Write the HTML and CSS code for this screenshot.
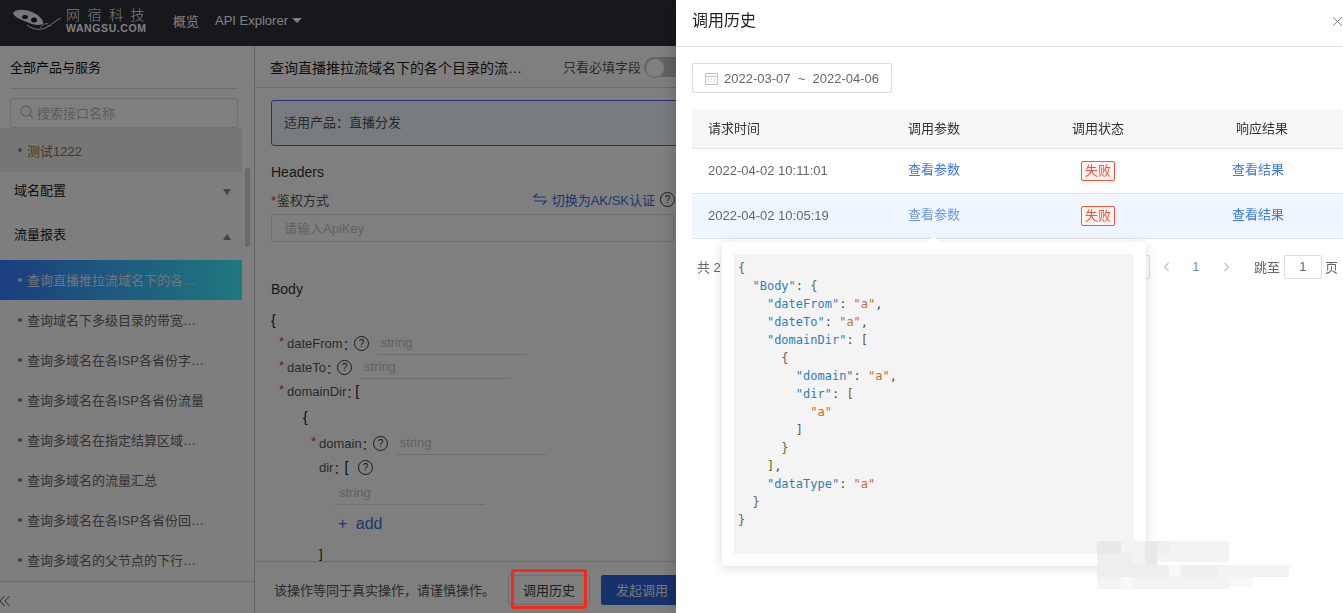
FILE: index.html
```html
<!DOCTYPE html>
<html lang="zh-CN">
<head>
<meta charset="utf-8">
<title>API Explorer</title>
<link rel="stylesheet" href="styles.css">
</head>
<body>
<div class="app">
  <header class="topbar">
    <div class="logo">
      <svg class="logo-mark" width="52" height="24" viewBox="0 0 52 24">
        <path d="M0 4C3 0 11 0 19 3c7 3 12 8 11 12-4 2-10 1-16-2C7 10 1 8 0 4z" fill="#f0f0f0"/>
        <ellipse cx="12" cy="8" rx="3" ry="2" fill="#1a1c20"/>
        <ellipse cx="21" cy="11" rx="3" ry="2.5" fill="#1a1c20"/>
        <path d="M14 16c6 5 15 6 22 1 4-3 8-6 12-8" fill="none" stroke="#e8e8e8" stroke-width="1"/>
        <path d="M27 19c3-4 6-5 8-4M32 20c2-3 4-4 6-3" fill="none" stroke="#e8e8e8" stroke-width="1"/>
      </svg>
      <div class="logo-text">
        <span class="logo-cn">网宿科技</span>
        <span class="logo-en">WANGSU.COM</span>
      </div>
    </div>
    <nav class="nav">
      <span>概览</span>
      <span class="nav-api">API Explorer<i class="nav-caret"></i></span>
    </nav>
  </header>
  <div class="main">
    <aside class="sidebar">
      <div class="side-title">全部产品与服务</div>
      <div class="side-search">
        <svg width="14" height="14" viewBox="0 0 14 14" fill="none" stroke="#b5b5b5" stroke-width="1.1"><circle cx="6" cy="6" r="5"/><path d="M9.7 9.7L13 13"/></svg>
        <span>搜索接口名称</span>
      </div>
      <ul class="side-list">
        <li class="api-item api-item-test"><span>测试1222</span></li>
        <li class="side-group">域名配置<i class="caret-down"></i></li>
        <li class="side-group">流量报表<i class="caret-up"></i></li>
        <li class="api-item api-item-active"><span>查询直播推拉流域名下的各个目录的流量</span></li>
        <li class="api-item"><span>查询域名下多级目录的带宽数据汇总</span></li>
        <li class="api-item"><span>查询多域名在各ISP各省份字节数据</span></li>
        <li class="api-item"><span>查询多域名在各ISP各省份流量</span></li>
        <li class="api-item"><span>查询多域名在指定结算区域的流量</span></li>
        <li class="api-item"><span>查询多域名的流量汇总</span></li>
        <li class="api-item"><span>查询多域名在各ISP各省份回源流量</span></li>
        <li class="api-item"><span>查询多域名的父节点的下行流量</span></li>
      </ul>
      <div class="side-foot">
        <svg width="10" height="12" viewBox="0 0 10 12" fill="none" stroke="#5a5a5a" stroke-width="1"><path d="M4.5 1L0 6l4.5 5M9.5 1L5 6l4.5 5"/></svg>
      </div>
      <div class="side-scroll"></div>
    </aside>
    <section class="content">
      <div class="content-head">
        <div class="content-title">查询直播推拉流域名下的各个目录的流量数据</div>
        <div class="only-required">只看必填字段<i class="switch"></i></div>
      </div>
      <div class="content-body">
        <div class="alert">适用产品：直播分发</div>
        <div class="heading heading-headers">Headers</div>
        <div class="auth-row">
          <span><em class="star">*</em>鉴权方式</span>
          <span class="auth-link">
            <svg width="14" height="12" viewBox="0 0 14 12" fill="none" stroke="currentColor" stroke-width="1.1"><path d="M0 4h13M4.5 0.5L1 4M14 8H1M9.5 11.5L13 8"/></svg>
            切换为AK/SK认证
            <svg class="help" width="15" height="15" viewBox="0 0 15 15"><circle cx="7.5" cy="7.5" r="7" fill="none" stroke="#333" stroke-width="1"/><text x="7.5" y="11" text-anchor="middle" font-size="10" fill="#333">?</text></svg>
          </span>
        </div>
        <input class="text-input" placeholder="请输入ApiKey">
        <div class="heading heading-body">Body</div>
        <div class="brace">{</div>
        <div class="field ind1"><em class="star">*</em>dateFrom<b>：</b>
          <svg class="help" width="15" height="15" viewBox="0 0 15 15"><circle cx="7.5" cy="7.5" r="7" fill="none" stroke="#333" stroke-width="1"/><text x="7.5" y="11" text-anchor="middle" font-size="10" fill="#333">?</text></svg>
          <input class="line-input" placeholder="string"></div>
        <div class="field ind1"><em class="star">*</em>dateTo<b>：</b>
          <svg class="help" width="15" height="15" viewBox="0 0 15 15"><circle cx="7.5" cy="7.5" r="7" fill="none" stroke="#333" stroke-width="1"/><text x="7.5" y="11" text-anchor="middle" font-size="10" fill="#333">?</text></svg>
          <input class="line-input" placeholder="string"></div>
        <div class="field ind1"><em class="star">*</em>domainDir<b>：</b><span class="bracket bracket-tight">[</span></div>
        <div class="brace brace-inner">{</div>
        <div class="field ind2"><em class="star">*</em>domain<b>：</b>
          <svg class="help" width="15" height="15" viewBox="0 0 15 15"><circle cx="7.5" cy="7.5" r="7" fill="none" stroke="#333" stroke-width="1"/><text x="7.5" y="11" text-anchor="middle" font-size="10" fill="#333">?</text></svg>
          <input class="line-input" placeholder="string"></div>
        <div class="field ind3">dir<b>：</b><span class="bracket">[</span>
          <svg class="help" width="15" height="15" viewBox="0 0 15 15"><circle cx="7.5" cy="7.5" r="7" fill="none" stroke="#333" stroke-width="1"/><text x="7.5" y="11" text-anchor="middle" font-size="10" fill="#333">?</text></svg></div>
        <div class="field ind4"><input class="line-input" placeholder="string"></div>
        <div class="add">+ add</div>
        <div class="field ind3 close-bracket">]</div>
      </div>
      <div class="content-foot">
        <span>该操作等同于真实操作，请谨慎操作。</span>
        <button class="btn btn-ghost">调用历史</button>
        <button class="btn btn-primary">发起调用</button>
      </div>
    </section>
  </div>
</div>
<div class="mask"></div>
<div class="red-mark"></div>
<aside class="drawer">
  <div class="drawer-head">
    <span>调用历史</span>
    <svg class="drawer-close" width="11" height="11" viewBox="0 0 11 11" stroke="#888" stroke-width="1"><path d="M1 1l9 9M10 1l-9 9"/></svg>
  </div>
  <div class="drawer-body">
    <div class="date-range">
      <svg width="13" height="13" viewBox="0 0 13 13" fill="none" stroke="#c4c4c4"><rect x="0.5" y="1.5" width="12" height="11"/><path d="M0.5 4.5h12M3 7h1M6 7h1M9 7h1M3 9.5h1M6 9.5h1M9 9.5h1"/></svg>
      <span>2022-03-07 &nbsp;~&nbsp; 2022-04-06</span>
    </div>
    <table class="history">
      <colgroup><col class="c1"><col class="c2"><col class="c3"><col class="c4"></colgroup>
      <thead>
        <tr><th>请求时间</th><th>调用参数</th><th class="center">调用状态</th><th class="center">响应结果</th></tr>
      </thead>
      <tbody>
        <tr><td class="time">2022-04-02 10:11:01</td><td><a class="link">查看参数</a></td><td class="center tag-cell"><span class="tag">失败</span></td><td class="center result"><a class="link">查看结果</a></td></tr>
        <tr class="hover"><td class="time">2022-04-02 10:05:19</td><td><a class="link link-soft">查看参数</a></td><td class="center tag-cell"><span class="tag">失败</span></td><td class="center result"><a class="link">查看结果</a></td></tr>
      </tbody>
    </table>
    <div class="pager">
      <span>共 2 条</span>
      <div class="pager-right">
        <div class="page-size">10 条/页</div>
        <svg class="page-arrow" width="30" height="12" viewBox="0 0 30 12" fill="none" stroke="#c0c0c0" stroke-width="1.2"><path d="M17.5 2l-4 4 4 4"/></svg>
        <span class="page-num">1</span>
        <svg class="page-arrow" width="30" height="12" viewBox="0 0 30 12" fill="none" stroke="#c0c0c0" stroke-width="1.2"><path d="M13.5 2l4 4-4 4"/></svg>
        <span class="jump">跳至</span>
        <div class="jump-input">1</div>
        <span class="jump-end">页</span>
      </div>
    </div>
  </div>
</aside>
<div class="popover">
  <i class="popover-arrow"></i>
<pre class="code"><span class="p">{</span>
  <span class="k">"Body"</span>: <span class="p">{</span>
    <span class="k">"dateFrom"</span>: <span class="s">"a"</span>,
    <span class="k">"dateTo"</span>: <span class="s">"a"</span>,
    <span class="k">"domainDir"</span>: <span class="b">[</span>
      <span class="p">{</span>
        <span class="k">"domain"</span>: <span class="s">"a"</span>,
        <span class="k">"dir"</span>: <span class="b">[</span>
          <span class="s">"a"</span>
        <span class="b">]</span>
      <span class="p">}</span>
    <span class="b">]</span>,
    <span class="k">"dataType"</span>: <span class="s">"a"</span>
  <span class="p">}</span>
<span class="p">}</span></pre>
</div>
<svg class="mosaic" width="194" height="48" viewBox="0 0 194 48">
  <g fill="#e8e8e8"><rect x="0" y="0" width="24" height="12"/><rect x="48" y="0" width="12" height="24"/></g>
  <g fill="#eeeeee"><rect x="0" y="12" width="36" height="12"/><rect x="60" y="0" width="12" height="12"/><rect x="0" y="24" width="72" height="12"/><rect x="84" y="24" width="36" height="12"/></g>
  <g fill="#f3f3f3"><rect x="24" y="0" width="24" height="12"/><rect x="36" y="12" width="12" height="12"/><rect x="60" y="12" width="72" height="9"/><rect x="72" y="0" width="60" height="12"/><rect x="0" y="36" width="24" height="12"/><rect x="36" y="36" width="96" height="12"/><rect x="120" y="24" width="72" height="12"/></g>
  <g fill="#f8f8f8"><rect x="24" y="36" width="12" height="12"/><rect x="72" y="24" width="12" height="12"/><rect x="132" y="36" width="24" height="10"/></g>
</svg>
</body>
</html>
```
FILE: styles.css
```css
* { box-sizing: border-box; }
html, body { margin: 0; height: 100%; overflow: hidden; }
body {
  font-family: "Liberation Sans", "Noto Sans CJK SC", sans-serif;
  font-size: 13px;
  color: #555;
  background: #fff;
}
em { font-style: normal; }
ul { margin: 0; padding: 0; list-style: none; }

.app { display: flex; flex-direction: column; height: 613px; }

/* top bar */
.topbar {
  flex: none; height: 46px; display: flex; align-items: center;
  background: #2c3038; color: #fff;
}
.logo { display: flex; align-items: center; width: 173px; padding: 0 0 4px 13px; }
.logo-mark { flex: none; margin-right: 1px; }
.logo-text { display: flex; flex-direction: column; line-height: 1; }
.logo-cn { font-size: 14px; letter-spacing: 7.5px; color: #f4f4f4; height: 14px; font-weight: 300; white-space: nowrap; }
.logo-en { font-size: 10.5px; font-weight: 700; color: #fff; margin-top: 1px; letter-spacing: 0.6px; white-space: nowrap; }
.nav { display: flex; align-items: center; gap: 16px; padding-bottom: 6px; }
.nav-api { display: flex; align-items: center; }
.nav-caret {
  margin-left: 4px; width: 0; height: 0;
  border-left: 5px solid transparent; border-right: 5px solid transparent;
  border-top: 5px solid #fff;
}

.main { flex: 1; display: flex; min-height: 0; }

/* sidebar */
.sidebar {
  position: relative; flex: none; width: 255px;
  display: flex; flex-direction: column;
  border-right: 1px solid #ccc;
}
.side-title {
  flex: none; height: 43px; margin: 0 16px 0 10px;
  line-height: 43px; color: #111;
  border-bottom: 1px solid #d8d8d8;
}
.side-search {
  flex: none; margin: 9px 16px 0 10px; height: 30px;
  display: flex; align-items: center; gap: 3px; padding: 0 0 2px 9px;
  border: 1px solid #ddd; border-radius: 3px; color: #bbb;
}
.side-list { flex: 1; width: 242px; overflow: hidden; background: #fcfcfc; }
.api-item { position: relative; height: 40px; display: flex; align-items: center; padding: 0 0 2px 27px; color: #666; }
.api-item::before {
  content: ""; position: absolute; left: 18px; top: 50%;
  width: 4px; height: 4px; margin-top: -2px; border-radius: 50%; background: #888;
}
.api-item span { width: 178px; white-space: nowrap; overflow: hidden; text-overflow: ellipsis; }
.api-item-test { height: 44px; padding: 1px 0 0 27px; background: #ececec; color: #8a7050; }
.api-item-active { background: linear-gradient(90deg, #387cff, #40f0ff); color: #dfe8fa; }
.api-item-active::before { background: #d8e4ff; }
.side-group {
  position: relative; height: 44px; padding: 0 0 10px 14px;
  display: flex; align-items: center; color: #222;
}
.caret-down, .caret-up {
  position: absolute; left: 223px; width: 0; height: 0;
  border-left: 4.5px solid transparent; border-right: 4.5px solid transparent;
}
.caret-down { top: 17px; border-top: 6px solid #888; }
.caret-up { top: 18px; border-bottom: 6px solid #888; }
.side-foot {
  flex: none; height: 32px; border-top: 1px solid #d8d8d8;
  display: flex; align-items: center; padding: 6px 0 0 0;
}
.side-scroll {
  position: absolute; left: 245px; top: 122px; width: 5px; height: 79px;
  background: #d4d4d4; border-radius: 3px;
}

/* content */
.content { flex: none; width: 422px; display: flex; flex-direction: column; overflow: hidden; }
.content-head {
  flex: none; height: 42px; display: flex; align-items: center; padding-left: 15px;
  border-bottom: 1px solid #d8d8d8; margin-right: -20px;
}
.content-title { width: 252px; font-size: 14px; color: #222; white-space: nowrap; overflow: hidden; text-overflow: ellipsis; }
.only-required { display: flex; align-items: center; margin-left: 41px; color: #555; white-space: nowrap; }
.switch {
  position: relative; flex: none; width: 44px; height: 20px; margin-left: 3px;
  border-radius: 10px; background: #c4c4c4;
}
.switch::after {
  content: ""; position: absolute; left: 1px; top: 1px;
  width: 18px; height: 18px; border-radius: 50%; background: #fff; border: 1px solid #ccc;
}
.content-body { flex: 1; min-height: 0; overflow: hidden; padding: 12px 0 0 16px; color: #444; }
.alert {
  width: 480px; height: 46px; line-height: 44px; padding-left: 12px;
  background: #f0f6ff; border: 1px solid #3a70e0; border-radius: 3px; color: #555;
}
.heading { height: 20px; line-height: 20px; font-size: 14px; color: #333; }
.heading-headers { margin-top: 16px; }
.heading-body { margin-top: 37px; }
.auth-row { margin-top: 7px; width: 404px; height: 20px; display: flex; justify-content: space-between; align-items: center; color: #555; }
.star { color: #e5333d; margin-right: 1px; }
.auth-link { display: flex; align-items: center; gap: 5px; color: #3c70dc; }
.auth-link .help { margin-left: 0; }
.text-input {
  display: block; margin-top: 5px; width: 403px; height: 28px; padding: 0 12px;
  border: 1px solid #ddd; border-radius: 2px; outline: 0;
  font: inherit; color: #555; background: #fff;
}
.text-input::placeholder, .line-input::placeholder { color: #c4c4c4; opacity: 1; }
.brace { margin-top: 11px; height: 21px; line-height: 20px; font-size: 14px; color: #222; }
.brace-inner { margin: 0; height: 28px; line-height: 28px; padding-left: 32px; }
.field { height: 24px; display: flex; align-items: center; white-space: nowrap; color: #555; }
.field b { flex: none; width: 10px; font-weight: 400; overflow: hidden; }
.field .star { flex: none; width: 7px; margin-right: 1px; position: relative; top: -2px; }
.ind1 { padding-left: 8px; }
.ind2 { padding-left: 40px; }
.ind3 { padding-left: 48px; }
.ind4 { padding-left: 64px; margin-top: 2px; }
.help { flex: none; margin-left: 1px; }
.bracket { margin-left: 1px; color: #222; font-size: 14px; }
.bracket-tight { margin-left: -1px; }
.ind3 .bracket { margin-right: 9px; }
.line-input {
  flex: none; width: 150px; height: 24px; margin-left: 8px; padding: 0 4px;
  border: 0; border-bottom: 1px solid #ddd; outline: 0; font: inherit; background: transparent;
}
.ind4 .line-input { margin-left: 0; }
.add { margin: 7px 0 0 67px; height: 24px; line-height: 24px; font-size: 16px; color: #3c70dc; word-spacing: 4px; }
.close-bracket { margin-top: 5px; color: #222; }
.content-foot {
  flex: none; height: 52px; display: flex; align-items: center; padding: 4px 0 0 19px;
  border-top: 1px solid #d8d8d8; white-space: nowrap; color: #555;
}
.btn { flex: none; height: 30px; border-radius: 2px; font: inherit; padding: 0; }
.btn-ghost { width: 82px; margin-left: 13px; background: #fff; border: 1px solid #ddd; color: #444; }
.btn-primary { width: 82px; margin-left: 11px; background: #2f62d8; border: 1px solid #2f62d8; color: #e8eefc; }

/* overlays */
.mask { position: fixed; inset: 0; background: rgba(0, 0, 0, .5); }
.red-mark {
  position: fixed; left: 511px; top: 569px; width: 76px; height: 40px;
  border: 3px solid #f5281c; border-radius: 3px;
}

/* drawer */
.drawer {
  position: fixed; left: 676px; top: 0; width: 680px; height: 613px;
  background: #fff; box-shadow: -6px 0 12px rgba(0, 0, 0, .12);
}
.drawer-head {
  position: relative; height: 47px; padding-left: 16px; line-height: 42px;
  font-size: 16px; color: #222; border-bottom: 1px solid #e2e2e2;
}
.drawer-close { position: absolute; left: 656px; top: 16px; }
.drawer-body { padding: 16px 0 0 16px; }
.date-range {
  width: 200px; height: 30px; display: flex; align-items: center; gap: 6px; padding-left: 12px;
  border: 1px solid #ddd; border-radius: 2px; color: #666;
}
.history { margin-top: 16px; width: 652px; table-layout: fixed; border-collapse: collapse; }
.c1 { width: 200px; } .c2 { width: 124px; } .c3, .c4 { width: 164px; }
.history th {
  height: 39px; padding: 0 0 2px 16px; text-align: left; font-weight: 400; color: #333;
  background: #f6f6f6; border-bottom: 1px solid #e4e4e4;
}
.history td { height: 45px; padding: 0 0 4px 16px; color: #666; border-bottom: 1px solid #e4e4e4; }
.history td.time { padding: 0 0 0 16px; }
.history th.center { text-align: center; padding: 0 0 2px; }
.history td.center { text-align: center; padding: 0 0 4px; }
.history td.tag-cell { padding: 0; }
.history td.result { padding: 0 8px 4px 0; }
.history .hover td { background: #f0f6ff; }
.link { color: #3a78f2; }
.link-soft { color: #6b97f0; }
.tag {
  display: inline-block; width: 34px; height: 20px; line-height: 18px; text-align: center;
  color: #f5533d; background: #fff3f0; border: 1px solid #f5533d; border-radius: 2px;
}
.pager { margin-top: 16px; width: 652px; height: 24px; display: flex; align-items: center; padding: 0 6px 0 5px; color: #666; }
.pager-right { margin-left: auto; display: flex; align-items: center; }
.page-size { width: 80px; height: 24px; line-height: 22px; padding-left: 8px; border: 1px solid #ddd; border-radius: 2px; margin-right: 1px; }
.page-arrow { flex: none; }
.page-num { width: 30px; text-align: center; color: #5b8cf0; }
.jump { margin-left: 13px; }
.jump-input { width: 38px; height: 24px; margin-left: 4px; line-height: 22px; text-align: center; border: 1px solid #ddd; border-radius: 2px; }
.jump-end { margin-left: 3px; }

/* popover */
.popover {
  position: fixed; left: 722px; top: 242px; width: 424px; height: 324px; padding: 12px;
  background: #fff; border-radius: 2px; box-shadow: 0 2px 12px rgba(0, 0, 0, .14);
}
.popover-arrow {
  position: absolute; left: 207px; top: -4px; width: 9px; height: 9px;
  background: #fff; transform: rotate(45deg);
}
.code {
  position: relative; margin: 0; height: 300px; padding: 5px 4px;
  background: #f4f4f4; font: 12px/18px "DejaVu Sans Mono", monospace; color: #3b4a55;
}
.k { color: #2f7fb8; }
.s { color: #c0702c; }
.p { color: #5a6a50; }
.b { color: #6a5a2a; }

.mosaic { position: fixed; left: 1097px; top: 541px; }
```
